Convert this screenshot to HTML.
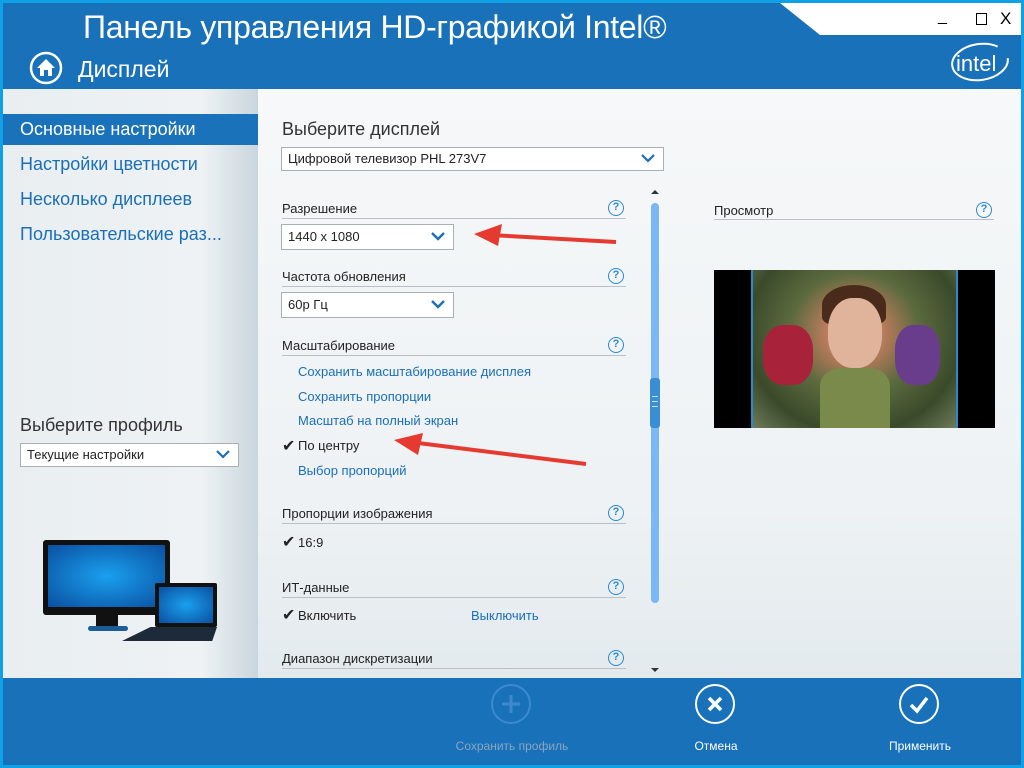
<!DOCTYPE html>
<html><head><meta charset="utf-8"><style>
*{margin:0;padding:0;box-sizing:border-box}
body{width:1024px;height:768px;position:relative;overflow:hidden;font-family:"Liberation Sans",sans-serif;background:#0fa0e6}
.abs{position:absolute}
#hdr{left:3px;top:3px;width:1018px;height:86px;background:#1871b9}
#left{left:3px;top:89px;width:255px;height:589px;background:linear-gradient(90deg,#e9eef1 0%,#eef2f4 78%,#c9d6dd 100%)}
#main{left:258px;top:89px;width:763px;height:589px;background:linear-gradient(180deg,#f6f8f9,#eef2f4 70%,#e3eaee)}
#foot{left:3px;top:678px;width:1018px;height:87px;background:#1871b9}
.nav{left:20px;font-size:18px;color:#1a6fb9}
.lbl{font-size:13px;color:#222}
.hr{height:1px;background:#b9c1c6}
.q{width:16px;height:16px;border:1.5px solid #2a8ad0;border-radius:50%;color:#2a8ad0;font-size:11px;font-weight:bold;text-align:center;line-height:13px}
.sel{border:1px solid #a8b0b5;background:#fff;font-size:13px;color:#222;padding-left:6px;height:26px;line-height:24px}
.chev{position:absolute;right:8px;top:6px}
.link{font-size:13px;color:#1a6fb9;left:298px}
.fbtn{font-size:12px;text-align:center;width:140px}
.circ{width:38px;height:38px;border:2px solid #fff;border-radius:50%}
</style></head><body>
<div id="hdr" class="abs"></div>
<div class="abs" style="left:780px;top:3px;width:241px;height:32px;background:#fff;clip-path:polygon(0 0,100% 0,100% 100%,40px 100%)"></div>
<div class="abs" style="left:83px;top:9px;font-size:32px;color:#fff;letter-spacing:-0.3px">Панель управления HD-графикой Intel®</div>
<div class="abs" style="left:938px;top:8px;font-size:16px;color:#000">_</div>
<div class="abs" style="left:976px;top:13px;width:11px;height:12px;border:1.5px solid #000"></div>
<div class="abs" style="left:1000px;top:9px;font-size:17px;color:#000">X</div>
<svg class="abs" style="left:29px;top:51px" width="34" height="34"><circle cx="17" cy="17" r="15" fill="none" stroke="#fff" stroke-width="2.5"/><path d="M17 8 L26 17 L23 17 L23 25 L11 25 L11 17 L8 17Z" fill="#fff"/><rect x="15" y="19" width="4" height="6" fill="#1871b9"/></svg>
<div class="abs" style="left:78px;top:56px;font-size:23px;color:#fff">Дисплей</div>
<svg class="abs" style="left:944px;top:40px" width="66" height="46"><ellipse cx="36" cy="22" rx="28" ry="18" fill="none" stroke="#fff" stroke-width="2" transform="rotate(-8 36 22)" stroke-dasharray="130 40"/><text x="12" y="31" fill="#fff" font-size="22" font-family="Liberation Sans">intel</text></svg>

<div id="left" class="abs"></div>
<div class="abs" style="left:3px;top:114px;width:255px;height:31px;background:#1a72bb"></div>
<div class="abs nav" style="top:119px;color:#fff">Основные настройки</div>
<div class="abs nav" style="top:154px">Настройки цветности</div>
<div class="abs nav" style="top:189px">Несколько дисплеев</div>
<div class="abs nav" style="top:224px">Пользовательские раз...</div>
<div class="abs" style="left:20px;top:415px;font-size:18px;color:#333">Выберите профиль</div>
<div class="abs sel" style="left:20px;top:443px;width:219px;height:24px;line-height:22px">Текущие настройки<svg class="chev" style="top:5px" width="14" height="10"><path d="M1 2l6 6 6-6" stroke="#1a6fb9" stroke-width="2.2" fill="none"/></svg></div>
<div class="abs" style="left:43px;top:540px;width:127px;height:75px;background:#111;border-radius:3px"></div>
<div class="abs" style="left:48px;top:545px;width:117px;height:62px;background:radial-gradient(#1aa0ee,#0a4fa0)"></div>
<div class="abs" style="left:96px;top:615px;width:22px;height:14px;background:#111"></div>
<div class="abs" style="left:88px;top:626px;width:40px;height:5px;background:#1a5d99;border-radius:3px"></div>
<div class="abs" style="left:155px;top:583px;width:62px;height:44px;background:#111;border-radius:2px"></div>
<div class="abs" style="left:159px;top:587px;width:54px;height:36px;background:radial-gradient(#1aa0ee,#0a4fa0)"></div>
<div class="abs" style="left:122px;top:627px;width:95px;height:14px;background:#1d2a3a;clip-path:polygon(30% 0,100% 0,95% 100%,0 100%)"></div>

<div id="main" class="abs"></div>
<div class="abs" style="left:282px;top:119px;font-size:18px;color:#333">Выберите дисплей</div>
<div class="abs sel" style="left:281px;top:147px;width:383px;height:24px;line-height:22px">Цифровой телевизор PHL 273V7<svg class="chev" style="top:5px" width="14" height="10"><path d="M1 2l6 6 6-6" stroke="#1a6fb9" stroke-width="2.2" fill="none"/></svg></div>

<div class="abs lbl" style="left:282px;top:201px">Разрешение</div><div class="abs q" style="left:608px;top:200px">?</div><div class="abs hr" style="left:282px;top:218px;width:344px"></div>
<div class="abs sel" style="left:281px;top:224px;width:173px">1440 x 1080<svg class="chev" width="14" height="10"><path d="M1 2l6 6 6-6" stroke="#1a6fb9" stroke-width="2.4" fill="none"/></svg></div>
<div class="abs lbl" style="left:282px;top:269px">Частота обновления</div><div class="abs q" style="left:608px;top:268px">?</div><div class="abs hr" style="left:282px;top:286px;width:344px"></div>
<div class="abs sel" style="left:281px;top:292px;width:173px">60p Гц<svg class="chev" width="14" height="10"><path d="M1 2l6 6 6-6" stroke="#1a6fb9" stroke-width="2.4" fill="none"/></svg></div>
<div class="abs lbl" style="left:282px;top:338px">Масштабирование</div><div class="abs q" style="left:608px;top:337px">?</div><div class="abs hr" style="left:282px;top:355px;width:344px"></div>
<div class="abs link" style="top:364px">Сохранить масштабирование дисплея</div>
<div class="abs link" style="top:389px">Сохранить пропорции</div>
<div class="abs link" style="top:413px">Масштаб на полный экран</div>
<div class="abs lbl" style="left:282px;top:436px;font-size:16px">✔</div><div class="abs lbl" style="left:298px;top:438px">По центру</div>
<div class="abs link" style="top:463px">Выбор пропорций</div>
<div class="abs lbl" style="left:282px;top:506px">Пропорции изображения</div><div class="abs q" style="left:608px;top:505px">?</div><div class="abs hr" style="left:282px;top:523px;width:344px"></div>
<div class="abs lbl" style="left:282px;top:532px;font-size:16px">✔</div><div class="abs lbl" style="left:298px;top:535px">16:9</div>
<div class="abs lbl" style="left:282px;top:580px">ИТ-данные</div><div class="abs q" style="left:608px;top:579px">?</div><div class="abs hr" style="left:282px;top:597px;width:344px"></div>
<div class="abs lbl" style="left:282px;top:605px;font-size:16px">✔</div><div class="abs lbl" style="left:298px;top:608px">Включить</div>
<div class="abs link" style="left:471px;top:608px">Выключить</div>
<div class="abs lbl" style="left:282px;top:651px">Диапазон дискретизации</div><div class="abs q" style="left:608px;top:650px">?</div><div class="abs hr" style="left:282px;top:668px;width:344px"></div>

<div class="abs" style="left:651px;top:190px;border:4px solid transparent;border-bottom:4px solid #333;border-top:0"></div>
<div class="abs" style="left:651px;top:203px;width:8px;height:400px;background:#7ab8f5;border-radius:4px"></div>
<div class="abs" style="left:650px;top:378px;width:10px;height:50px;background:#3a8ed4;border-radius:3px"></div>
<div class="abs" style="left:652px;top:396px;width:6px;height:1px;background:#cde;box-shadow:0 5px #cde,0 10px #cde"></div>
<div class="abs" style="left:651px;top:668px;border:4px solid transparent;border-top:4px solid #333;border-bottom:0"></div>

<div class="abs lbl" style="left:714px;top:203px">Просмотр</div><div class="abs q" style="left:976px;top:202px">?</div><div class="abs hr" style="left:714px;top:219px;width:280px"></div>
<div class="abs" style="left:714px;top:270px;width:281px;height:158px;background:#000"></div>
<div class="abs" style="left:751px;top:270px;width:207px;height:158px;border-left:2px solid #2a8ad0;border-right:2px solid #2a8ad0;background:radial-gradient(ellipse at 50% 40%,#d9a88a 0%,#b37a5a 22%,#5b6a3e 45%,#3a4a2a 75%,#6d7b5a 100%)"></div>
<div class="abs" style="left:822px;top:285px;width:64px;height:40px;background:#4a2a1a;border-radius:50% 50% 20% 20%"></div>
<div class="abs" style="left:828px;top:298px;width:54px;height:70px;background:#e0b49a;border-radius:45%"></div>
<div class="abs" style="left:820px;top:368px;width:70px;height:60px;background:#7a8a4a;border-radius:30% 30% 0 0"></div>
<div class="abs" style="left:763px;top:325px;width:50px;height:60px;background:#a8223a;border-radius:40%"></div>
<div class="abs" style="left:895px;top:325px;width:45px;height:60px;background:#6a3d8c;border-radius:40%"></div>

<svg class="abs" style="left:470px;top:222px" width="150" height="30"><path d="M146 20 L20 13" stroke="#e53a30" stroke-width="4"/><path d="M4 12 L32 2 L28 24Z" fill="#e53a30"/></svg>
<svg class="abs" style="left:390px;top:430px" width="200" height="40"><path d="M196 34 L20 12" stroke="#e53a30" stroke-width="4"/><path d="M4 10 L33 3 L28 25Z" fill="#e53a30"/></svg>

<div id="foot" class="abs"></div>
<svg class="abs" style="left:490px;top:683px" width="42" height="42"><circle cx="21" cy="21" r="19" fill="none" stroke="#3b8ad0" stroke-width="2"/><path d="M21 12v18M12 21h18" stroke="#3b8ad0" stroke-width="3"/></svg>
<div class="abs fbtn" style="left:442px;top:739px;color:#8aa6c0">Сохранить профиль</div>
<svg class="abs" style="left:694px;top:683px" width="42" height="42"><circle cx="21" cy="21" r="19" fill="none" stroke="#fff" stroke-width="2"/><path d="M15 15l12 12M27 15l-12 12" stroke="#fff" stroke-width="3.5"/></svg>
<div class="abs fbtn" style="left:646px;top:739px;color:#fff">Отмена</div>
<svg class="abs" style="left:898px;top:683px" width="42" height="42"><circle cx="21" cy="21" r="19" fill="none" stroke="#fff" stroke-width="2"/><path d="M13 22l6 6 10-13" stroke="#fff" stroke-width="3.5" fill="none"/></svg>
<div class="abs fbtn" style="left:850px;top:739px;color:#fff">Применить</div>
</body></html>
